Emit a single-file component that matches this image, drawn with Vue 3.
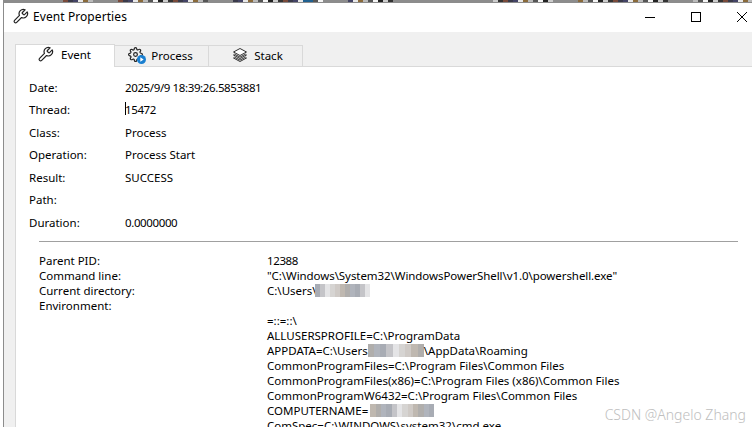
<script setup>
const rows = [
  ['Date:', '2025/9/9 18:39:26.5853881', true],
  ['Thread:', '15472', true],
  ['Class:', 'Process', false],
  ['Operation:', 'Process Start', false],
  ['Result:', 'SUCCESS', false],
  ['Path:', '', false],
  ['Duration:', '0.0000000', true],
]
const palette = ['#c4c4c8', '#b0aeac', '#d6d4d2', '#a8acb4', '#bfb8b0', '#e4e4e6', '#b0b4bc', '#cfcac6']
const mosaic = (n) => Array.from({ length: n }, (_, i) => palette[(i * 5 + n) % palette.length])
const noise = ['#333', '#f4f4f4', '#8a6a3a', '#3a3a4a', '#ccc', '#555', '#e8e8e8', '#7a4a3a', '#222', '#bbb', '#446']
const strip = Array.from({ length: 150 }, (_, i) => {
  if (i < 12 || (i >= 78 && i < 98)) return '#8c8c8c'
  if (i >= 60 && i < 62) return '#20608f'
  return i % 23 > 17 ? '#8c8c8c' : noise[(i * 7) % noise.length]
})
</script>

<template>
  <div class="page">
    <div class="strip">
      <i v-for="(c, i) in strip" :key="i" :style="{ background: c }"></i>
    </div>
    <div class="window">
      <header class="titlebar">
        <svg class="wrench" viewBox="0 0 24 24"><path d="M14.7 6.3a1 1 0 0 0 0 1.4l1.6 1.6a1 1 0 0 0 1.4 0l3.77-3.77a6 6 0 0 1-7.94 7.94l-6.91 6.91a2.12 2.12 0 0 1-3-3l6.91-6.91a6 6 0 0 1 7.94-7.94l-3.76 3.76z"/></svg>
        <span class="title">Event Properties</span>
        <div class="controls">
          <span class="ctl"><svg width="10" height="10" viewBox="0 0 10 10"><path d="M0 5.5h10" stroke="#000" fill="none"/></svg></span>
          <span class="ctl"><svg width="10" height="10" viewBox="0 0 10 10"><rect x=".5" y=".5" width="9" height="9" stroke="#000" fill="none"/></svg></span>
          <span class="ctl"><svg width="10" height="10" viewBox="0 0 10 10"><path d="M0 0l10 10M10 0L0 10" stroke="#000" fill="none"/></svg></span>
        </div>
      </header>
      <div class="body">
        <nav class="tabs">
          <div class="tab active">
            <svg class="wrench" viewBox="0 0 24 24"><path d="M14.7 6.3a1 1 0 0 0 0 1.4l1.6 1.6a1 1 0 0 0 1.4 0l3.77-3.77a6 6 0 0 1-7.94 7.94l-6.91 6.91a2.12 2.12 0 0 1-3-3l6.91-6.91a6 6 0 0 1 7.94-7.94l-3.76 3.76z"/></svg>
            <span>Event</span>
          </div>
          <div class="tab">
            <span class="gearbox">
              <svg class="gear" viewBox="0 0 24 24"><circle cx="12" cy="12" r="3"/><path d="M19.4 15a1.65 1.65 0 0 0 .33 1.82l.06.06a2 2 0 0 1 0 2.83 2 2 0 0 1-2.83 0l-.06-.06a1.65 1.65 0 0 0-1.82-.33 1.65 1.65 0 0 0-1 1.51V21a2 2 0 0 1-2 2 2 2 0 0 1-2-2v-.09A1.65 1.65 0 0 0 9 19.4a1.65 1.65 0 0 0-1.82.33l-.06.06a2 2 0 0 1-2.83 0 2 2 0 0 1 0-2.83l.06-.06a1.65 1.65 0 0 0 .33-1.82 1.65 1.65 0 0 0-1.51-1H3a2 2 0 0 1-2-2 2 2 0 0 1 2-2h.09A1.65 1.65 0 0 0 4.6 9a1.65 1.65 0 0 0-.33-1.82l-.06-.06a2 2 0 0 1 0-2.83 2 2 0 0 1 2.83 0l.06.06a1.65 1.65 0 0 0 1.82.33H9a1.65 1.65 0 0 0 1-1.51V3a2 2 0 0 1 2-2 2 2 0 0 1 2 2v.09a1.65 1.65 0 0 0 1 1.51 1.65 1.65 0 0 0 1.82-.33l.06-.06a2 2 0 0 1 2.83 0 2 2 0 0 1 0 2.83l-.06.06a1.65 1.65 0 0 0-.33 1.82V9a1.65 1.65 0 0 0 1.51 1H21a2 2 0 0 1 2 2 2 2 0 0 1-2 2h-.09a1.65 1.65 0 0 0-1.51 1z"/></svg>
              <svg class="play" viewBox="0 0 10 10"><circle cx="5" cy="5" r="5" fill="#1a7fd0"/><path d="M3.7 2.6L7.4 5 3.7 7.4z" fill="#fff"/></svg>
            </span>
            <span>Process</span>
          </div>
          <div class="tab stack">
            <svg class="layers" viewBox="0 0 16 16"><path d="M8 1.5L14.5 5 8 8.5 1.5 5z"/><path d="M2.5 7.2L1.5 8 8 11.5 14.5 8l-1-.8L8 10.1z"/><path d="M2.5 10.2L1.5 11 8 14.5 14.5 11l-1-.8L8 13.1z"/></svg>
            <span>Stack</span>
          </div>
        </nav>
        <section class="panel">
          <div class="fields">
            <div v-for="(r, i) in rows" :key="r[0]" class="field">
              <span class="flabel">{{ r[0] }}</span>
              <span class="fvalue" :class="{ caret: i === 1, num: r[2] }">{{ r[1] }}</span>
            </div>
          </div>
          <hr class="rule" />
          <div class="details">
            <div class="drow"><span class="dlabel">Parent PID:</span><span class="num">12388</span></div>
            <div class="drow"><span class="dlabel">Command line:</span><span class="tight">"C:\Windows\System32\WindowsPowerShell\v1.0\powershell.exe"</span></div>
            <div class="drow"><span class="dlabel">Current directory:</span><span class="inl">C:\Users\<b class="mos m1"><i v-for="(c, i) in mosaic(11)" :key="i" :style="{ background: c }"></i></b></span></div>
            <div class="drow"><span class="dlabel">Environment:</span><span></span></div>
            <div class="drow"><span class="dlabel"></span><span>=::=::\</span></div>
            <div class="drow"><span class="dlabel"></span><span>ALLUSERSPROFILE=C:\ProgramData</span></div>
            <div class="drow"><span class="dlabel"></span><span class="inl">APPDATA=C:\Users<b class="mos m2"><i v-for="(c, i) in mosaic(9)" :key="i" :style="{ background: c }"></i></b>\AppData\Roaming</span></div>
            <div class="drow"><span class="dlabel"></span><span>CommonProgramFiles=C:\Program Files\Common Files</span></div>
            <div class="drow"><span class="dlabel"></span><span>CommonProgramFiles(x86)=C:\Program Files (x86)\Common Files</span></div>
            <div class="drow"><span class="dlabel"></span><span>CommonProgramW6432=C:\Program Files\Common Files</span></div>
            <div class="drow"><span class="dlabel"></span><span class="inl">COMPUTERNAME=<b class="mos m3"><i v-for="(c, i) in mosaic(12)" :key="i" :style="{ background: c }"></i></b></span></div>
            <div class="drow"><span class="dlabel"></span><span>ComSpec=C:\WINDOWS\system32\cmd.exe</span></div>
          </div>
        </section>
      </div>
    </div>
    <div class="watermark">CSDN @Angelo Zhang</div>
  </div>
</template>

<style scoped>
.page {
  position: relative;
  width: 752px;
  height: 427px;
  overflow: hidden;
  background: #fff;
  font-family: "Noto Sans", "Open Sans", sans-serif;
  font-size: 11.5px;
  color: #000;
}
.strip { display: flex; height: 2px; padding-left: 3px; }
.strip i { flex: 1; }
.window {
  height: 425px;
  margin-left: 3px;
  border-left: 1px solid #8c8c8c;
  border-top: 1px solid #8c8c8c;
  display: flex;
  flex-direction: column;
}
.titlebar {
  height: 29px;
  box-sizing: border-box;
  padding: 0 0 2px 8px;
  flex: none;
  display: flex;
  align-items: center;
  background: #fff;
}
.title { margin-left: 4px; font-size: 12px; letter-spacing: .08px; }
.wrench { width: 17px; height: 17px; fill: none; stroke: #222; stroke-width: 1.7; stroke-linejoin: round; }
.controls { margin-left: auto; margin-right: -13px; display: flex; }
.ctl { width: 46px; height: 27px; display: flex; align-items: center; justify-content: center; }
.body { flex: 1; min-height: 0; background: #f0f0f0; padding: 11px 0 0 11px; display: flex; flex-direction: column; }
.tabs { display: flex; height: 23px; align-items: flex-end; flex: none; }
.tab {
  width: 94px;
  height: 21px;
  box-sizing: border-box;
  border: 1px solid #d9d9d9;
  border-left: none;
  border-bottom: none;
  background: #f0f0f0;
  display: flex;
  align-items: center;
  justify-content: center;
  gap: 6px;
  padding: 0 2px 2px 0;
}
.tab.stack { padding-left: 4px; padding-right: 0; }
.tab.active {
  width: 100px;
  height: 23px;
  background: #fff;
  border-left: 1px solid #d9d9d9;
  gap: 7px;
  padding-bottom: 4px;
  margin-bottom: -1px;
  position: relative;
  z-index: 1;
}
.gearbox { position: relative; width: 17px; height: 16px; display: block; }
.gear { position: absolute; left: 0; top: 0; width: 15px; height: 15px; fill: none; stroke: #222; stroke-width: 1.9; }
.play { position: absolute; right: -1px; bottom: -1px; width: 9px; height: 9px; }
.layers { width: 16px; height: 16px; fill: #fff; stroke: #333; stroke-width: 1; stroke-linejoin: round; }
.panel {
  flex: 1;
  min-height: 0;
  background: #fff;
  border-top: 1px solid #d9d9d9;
  border-left: 1px solid #d9d9d9;
  padding: 9px 0 0 13px;
  overflow: hidden;
}
.fields { display: grid; grid-auto-rows: 22.5px; }
.field { display: grid; grid-template-columns: 96px 1fr; align-items: center; }
.num { letter-spacing: -.38px; }
.tight { letter-spacing: -.07px; }
.caret { position: relative; }
.caret::before { content: ""; position: absolute; left: 0; top: 0; height: 13px; width: 1px; background: #000; }
.rule { border: 0; border-top: 1px solid #a0a0a0; margin: 7px 14px 0 10px; }
.details { margin: 11px 0 0 10px; }
.drow { display: grid; grid-template-columns: 228px 1fr; height: 15px; line-height: 15px; white-space: nowrap; }
.inl { display: flex; align-items: center; }
.mos { display: flex; height: 13px; }
.mos i { flex: 1; }
.m1 { width: 55px; margin-left: -2px; }
.m2 { width: 56px; }
.m3 { width: 64px; margin-left: 2px; }
.watermark {
  position: absolute;
  right: 6px;
  bottom: 3px;
  font-size: 14px;
  font-weight: 300;
  color: #b4b4b4;
  opacity: .85;
}
</style>
